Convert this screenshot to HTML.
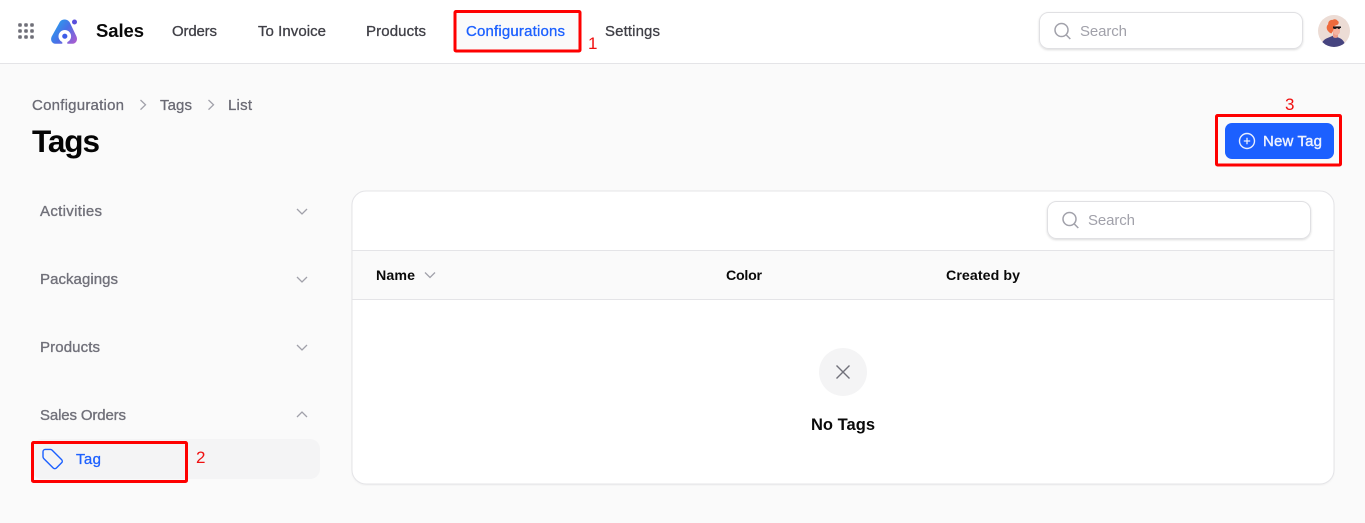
<!DOCTYPE html>
<html lang="en">
<head>
<meta charset="utf-8">
<title>Tags</title>
<style>
html,body{margin:0;padding:0;width:1365px;height:523px;overflow:hidden;background:#fafafa}
svg{display:block}
text{font-family:"Liberation Sans",Arial,sans-serif;font-size:15px;white-space:pre}
.nav{fill:#3f3f46;stroke:#3f3f46;stroke-width:.3}
.bc{fill:#6b6b75;stroke:#6b6b75;stroke-width:.3}
.side{fill:#71717a;stroke:#71717a;stroke-width:.35}
.ph{fill:#a1a1aa}
.th{fill:#0a0a0a;font-weight:700;font-size:14.2px}
.blue{fill:#1c60ff;stroke:#1c60ff;stroke-width:.3}
.red{font-size:17px;fill:#f01010}
.ann{fill:none;stroke:#fe0000;stroke-width:3}
.chev{fill:none;stroke:#a1a1aa;stroke-width:1.3}
.ico{fill:none;stroke:#a1a1aa;stroke-width:1.4}
</style>
</head>
<body>
<svg width="1365" height="523" viewBox="0 0 1365 523" xmlns="http://www.w3.org/2000/svg">
<defs>
<linearGradient id="lg" x1="0" y1="0.2" x2="1" y2="0.9">
<stop offset="0" stop-color="#25a4ef"/><stop offset=".5" stop-color="#4a6fe6"/><stop offset="1" stop-color="#ad5ccf"/>
</linearGradient>
<filter id="sh" x="-5%" y="-20%" width="110%" height="150%"><feDropShadow dx="0" dy="1" stdDeviation="1" flood-color="#000" flood-opacity=".14"/></filter>
<filter id="sh2" x="-2%" y="-2%" width="104%" height="104%"><feDropShadow dx="0" dy="1" stdDeviation=".8" flood-color="#000" flood-opacity=".04"/></filter>
<clipPath id="av"><circle cx="1334" cy="31" r="16"/></clipPath>
</defs>

<rect width="1365" height="523" fill="#fafafa"/>

<!-- top bar -->
<rect width="1365" height="63" fill="#fff"/>
<rect y="63" width="1365" height="1" fill="#e4e4e7"/>
<g fill="#6f6f78">
<rect x="18.200" y="23.200" width="3.600" height="3.600" rx="1"/><rect x="24.200" y="23.200" width="3.600" height="3.600" rx="1"/><rect x="30.200" y="23.200" width="3.600" height="3.600" rx="1"/>
<rect x="18.200" y="29.200" width="3.600" height="3.600" rx="1"/><rect x="24.200" y="29.200" width="3.600" height="3.600" rx="1"/><rect x="30.200" y="29.200" width="3.600" height="3.600" rx="1"/>
<rect x="18.200" y="35.200" width="3.600" height="3.600" rx="1"/><rect x="24.200" y="35.200" width="3.600" height="3.600" rx="1"/><rect x="30.200" y="35.200" width="3.600" height="3.600" rx="1"/>
</g>
<!-- logo -->
<path d="M59.500 22.500C61.500 18.500 67.500 18.500 69.800 22.500L76.500 36.500C78 40 76 43.800 72.500 43.800H55.500C52 43.800 50 40 51.700 36.500z" fill="url(#lg)"/>
<circle cx="64.800" cy="36.300" r="6.300" fill="#fff"/>
<rect x="62.300" y="41" width="5" height="3.500" fill="#fff"/>
<circle cx="64.800" cy="36.200" r="2.600" fill="#3d5de8"/>
<circle cx="74.500" cy="22" r="2.500" fill="#5a4fdc"/>
<text x="96" y="37" style="font-size:18.500px;font-weight:700" fill="#0a0a0a" textLength="48" lengthAdjust="spacing">Sales</text>

<text class="nav" x="172" y="36" textLength="45">Orders</text>
<text class="nav" x="258" y="36" textLength="68">To Invoice</text>
<text class="nav" x="366" y="36" textLength="60">Products</text>
<rect x="455" y="11.500" width="125" height="39.500" rx="1" fill="#fafafa"/>
<text class="blue" x="466" y="36" textLength="99">Configurations</text>
<text class="nav" x="605" y="36" textLength="55">Settings</text>
<rect class="ann" x="455" y="11.500" width="125" height="39.500" rx="1"/>
<text class="red" x="588" y="49" textLength="9">1</text>

<!-- top search -->
<rect x="1039.500" y="12.500" width="263" height="36" rx="9" fill="#fff" stroke="#e0e0e3" filter="url(#sh)"/>
<circle cx="1061.500" cy="30" r="6.500" class="ico" style="stroke-width:1.500"/>
<path d="M1066.300 35l4 4" class="ico" style="stroke-width:1.500"/>
<text class="ph" x="1080" y="36" textLength="47">Search</text>

<!-- avatar -->
<circle cx="1334" cy="31" r="16" fill="#ecdcd5"/>
<g clip-path="url(#av)">
<path d="M1321 47c.3-4.500 2.500-7.500 6.500-9l6-2.500 6 2.500c3.500 1.500 5.500 4.500 6 9z" fill="#46447f"/>
<path d="M1333 31h5v6c-1.200 1.200-3.800 1.200-5 0z" fill="#ee9d8a"/>
<path d="M1333 26h7v5.500c0 2-1.700 3.500-3.500 3.500s-3.500-1.500-3.500-3.500z" fill="#f4b3a1"/>
<path d="M1328 31c-2-2.500-1.500-5.500.2-6.800-.2-2.500 2-4.700 4.300-4.200 1.500-1.200 4-1 5 .8 1.500.5 1.500 2.500.5 3.700l-3.500 1.500-1.500 5-1.500 2.500c-1.500-.3-2.500-1.200-3.500-2.500z" fill="#ee6a3c"/>
<path d="M1333 26.500h8v1.500h-.8c-.5 1.300-2.300 1.300-2.800 0h-.6c-.5 1.300-3.300 1.300-3.800 0z" fill="#15151a"/>
</g>

<!-- breadcrumb -->
<text class="bc" x="32" y="110" textLength="92">Configuration</text>
<path d="M140.500 100l5 4.800-5 4.800" class="chev"/>
<text class="bc" x="160" y="110" textLength="32">Tags</text>
<path d="M208.500 100l5 4.800-5 4.800" class="chev"/>
<text class="bc" x="228" y="110" textLength="24">List</text>
<text x="32" y="152" style="font-size:31.500px;font-weight:700" fill="#050505" textLength="68" lengthAdjust="spacing">Tags</text>

<!-- new tag -->
<rect x="1225" y="123" width="109" height="36" rx="7" fill="#1c60ff"/>
<circle cx="1247" cy="141" r="7.500" fill="none" stroke="#e8eeff" stroke-width="1.400"/>
<path d="M1247 137.800v6.400M1243.800 141h6.400" stroke="#e8eeff" stroke-width="1.300" fill="none"/>
<text x="1263" y="146" fill="#eef2ff" stroke="#eef2ff" stroke-width=".4" textLength="59">New Tag</text>
<rect class="ann" x="1216.500" y="115.500" width="124" height="49.500" rx="1"/>
<text class="red" x="1285" y="110" textLength="9">3</text>

<!-- sidebar -->
<text class="side" x="40" y="216" textLength="62">Activities</text>
<path d="M297 209l5 5 5-5" class="chev"/>
<text class="side" x="40" y="284" textLength="78">Packagings</text>
<path d="M297 277l5 5 5-5" class="chev"/>
<text class="side" x="40" y="352" textLength="60">Products</text>
<path d="M297 345l5 5 5-5" class="chev"/>
<text class="side" x="40" y="420" textLength="86">Sales Orders</text>
<path d="M297 417l5-5 5 5" class="chev"/>
<rect x="32" y="439" width="288" height="40" rx="10" fill="#f4f4f5"/>
<path d="M43 451.700v5.100c0 .7.300 1.300.8 1.800l9.400 9.400c.9.900 2.300.9 3.200 0l5.200-5.200c.9-.9.900-2.300 0-3.200l-9.400-9.400c-.5-.5-1.100-.8-1.800-.8h-5.100c-1.300 0-2.300 1-2.300 2.300z" fill="none" stroke="#1c60ff" stroke-width="1.400"/>
<text class="blue" x="76" y="464" textLength="25">Tag</text>
<rect class="ann" x="32.500" y="442.500" width="154" height="39" rx="1"/>
<text class="red" x="196" y="463" textLength="10">2</text>

<!-- card -->
<rect x="352" y="191" width="982" height="293" rx="14" fill="#fff" stroke="#e4e4e7" filter="url(#sh2)"/>
<rect x="352.500" y="250" width="981" height="50" fill="#fafafa"/>
<rect x="352" y="250" width="982" height="1" fill="#e4e4e7"/>
<rect x="352" y="299" width="982" height="1" fill="#e4e4e7"/>

<rect x="1047.500" y="201.500" width="263" height="37" rx="9" fill="#fff" stroke="#e0e0e3" filter="url(#sh)"/>
<circle cx="1069.500" cy="219" r="6.500" class="ico" style="stroke-width:1.500"/>
<path d="M1074.300 224l4 4" class="ico" style="stroke-width:1.500"/>
<text class="ph" x="1088" y="225" textLength="47">Search</text>

<text class="th" x="376" y="280" textLength="39">Name</text>
<path d="M425 272.500l5 5 5-5" class="chev"/>
<text class="th" x="726" y="280" textLength="36">Color</text>
<text class="th" x="946" y="280" textLength="74">Created by</text>

<circle cx="843" cy="372" r="24" fill="#f4f4f5"/>
<path d="M836.500 365.500l13 13M849.500 365.500l-13 13" stroke="#71717a" stroke-width="1.400" fill="none"/>
<text x="811" y="430" style="font-size:16.500px;font-weight:700" fill="#0a0a0a" textLength="64">No Tags</text>
</svg>
</body>
</html>
